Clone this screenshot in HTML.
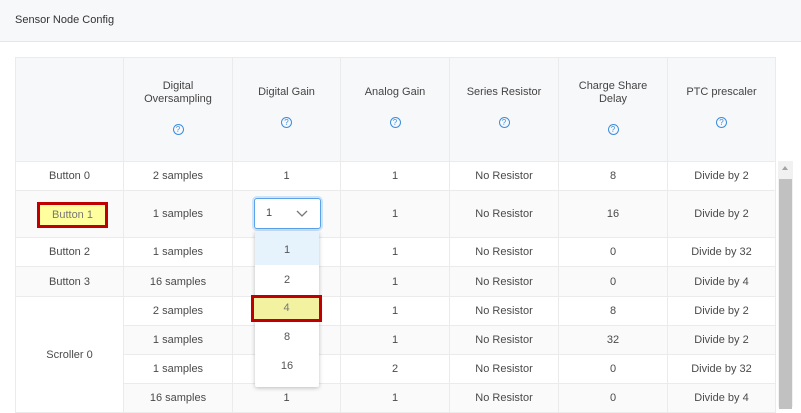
<!DOCTYPE html>
<html><head><style>
*{margin:0;padding:0;box-sizing:border-box}
body{width:801px;height:407px;overflow:hidden;background:#fff;font-family:"Liberation Sans",sans-serif;font-size:11px;color:#4a4a4a;position:relative}
.hdr{position:absolute;left:0;top:0;width:801px;height:42px;background:#f7f8fa;border-bottom:1px solid #e4e6ea}
.hdr span{position:absolute;left:15px;top:14px;font-size:11px;color:#333}
table{position:absolute;left:15px;top:57px;border-collapse:collapse;table-layout:fixed}
td,th{border:1px solid #ebebeb;text-align:center;font-weight:normal;vertical-align:middle}
th{background:#f7f8fa;color:#444;height:104px;padding-bottom:4px;line-height:13px}
.q{display:inline-block;width:11px;height:11px;border:1px solid #3c8dde;border-radius:50%;color:#3c8dde;font-size:8px;line-height:9px;margin-top:18px}
tr.g td{background:#fafafa}
.sb{position:absolute;left:778px;top:161px;width:15px;height:246px;background:#f1f1f1}
.sb i{position:absolute;left:1px;top:18px;width:13px;height:230px;background:#c1c1c1}
.sb b{position:absolute;left:4px;top:5px;border:3px solid transparent;border-bottom:4px solid #a3a3a3;border-top:0}
</style></head><body>
<div class="hdr"><span>Sensor Node Config</span></div>
<table>
<colgroup><col style="width:108px"><col style="width:109px"><col style="width:108px"><col style="width:109px"><col style="width:109px"><col style="width:109px"><col style="width:108px"></colgroup>
<tr><th></th><th>Digital<br>Oversampling<br><span class="q">?</span></th><th>Digital Gain<br><span class="q">?</span></th><th>Analog Gain<br><span class="q">?</span></th><th>Series Resistor<br><span class="q">?</span></th><th>Charge Share<br>Delay<br><span class="q">?</span></th><th>PTC prescaler<br><span class="q">?</span></th></tr>
<tr style="height:29px"><td>Button 0</td><td>2 samples</td><td>1</td><td>1</td><td>No Resistor</td><td>8</td><td>Divide by 2</td></tr>
<tr class="g" style="height:47px"><td></td><td>1 samples</td><td></td><td>1</td><td>No Resistor</td><td>16</td><td>Divide by 2</td></tr>
<tr style="height:29px"><td>Button 2</td><td>1 samples</td><td>1</td><td>1</td><td>No Resistor</td><td>0</td><td>Divide by 32</td></tr>
<tr class="g" style="height:30px"><td>Button 3</td><td>16 samples</td><td>1</td><td>1</td><td>No Resistor</td><td>0</td><td>Divide by 4</td></tr>
<tr style="height:29px"><td rowspan="4" style="background:#fff">Scroller 0</td><td>2 samples</td><td>4</td><td>1</td><td>No Resistor</td><td>8</td><td>Divide by 2</td></tr>
<tr class="g" style="height:29px"><td>1 samples</td><td>8</td><td>1</td><td>No Resistor</td><td>32</td><td>Divide by 2</td></tr>
<tr style="height:29px"><td>1 samples</td><td>16</td><td>2</td><td>No Resistor</td><td>0</td><td>Divide by 32</td></tr>
<tr class="g" style="height:29px"><td>16 samples</td><td>1</td><td>1</td><td>No Resistor</td><td>0</td><td>Divide by 4</td></tr>
</table>
<div style="position:absolute;left:37px;top:202px;width:71px;height:26px;border:3px solid #c00000;background:#ffff9e;color:#777;text-align:center;line-height:20px">Button 1</div>
<div style="position:absolute;left:254px;top:198px;width:67px;height:31px;border:1px solid #5aa3e8;box-shadow:0 0 0 2px #cfe4f8;border-radius:3px;background:#fff">
<span style="position:absolute;left:11px;top:8px">1</span>
<svg style="position:absolute;left:41px;top:11px" width="12" height="8"><path d="M1 1L6 6L11 1" fill="none" stroke="#777" stroke-width="1.3"/></svg></div>
<div style="position:absolute;left:255px;top:231px;width:64px;height:156px;background:#fff;box-shadow:0 1px 4px rgba(0,0,0,.25);border-radius:2px;color:#555;text-align:center">
<div style="height:34px;line-height:38px;background:#e6f2fc">1</div>
<div style="height:29px;line-height:30px">2</div>
<div style="height:29px"></div>
<div style="height:29px;line-height:28px">8</div>
<div style="height:29px;line-height:28px">16</div>
</div>
<div style="position:absolute;left:251px;top:295px;width:71px;height:27px;border:3px solid #c00000;background:#f2f2a0;color:#777;text-align:center;line-height:21px">4</div>
<div class="sb"><b></b><i></i></div>
</body></html>
